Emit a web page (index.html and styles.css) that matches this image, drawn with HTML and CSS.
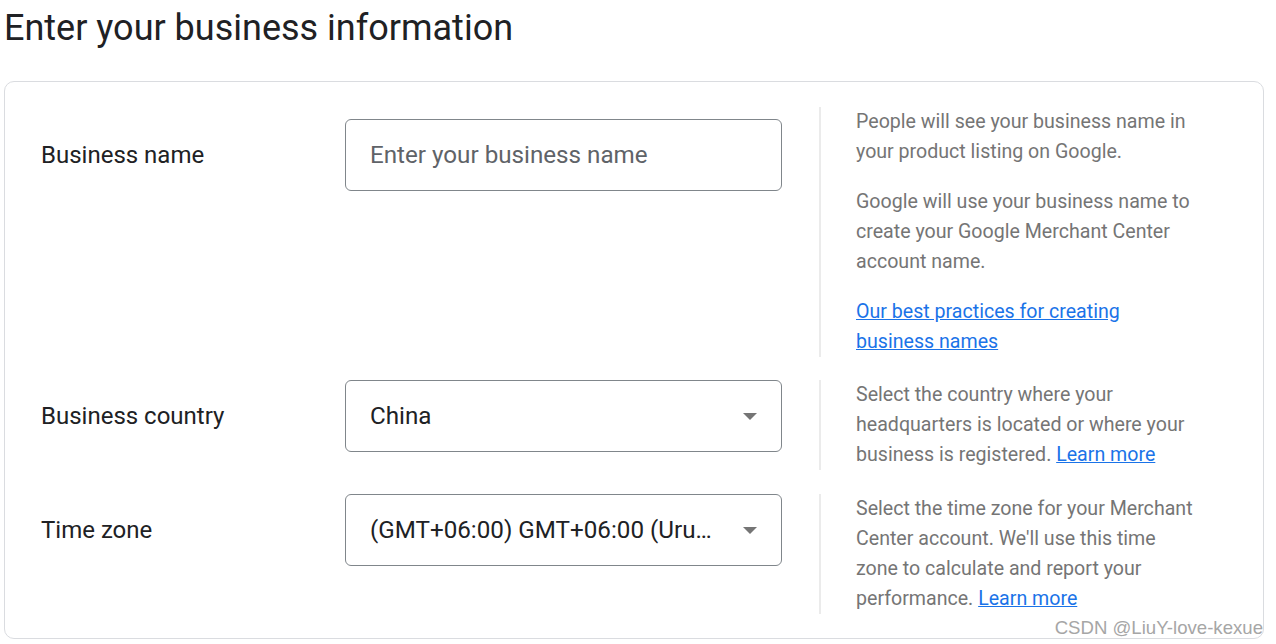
FILE: index.html
```html
<!DOCTYPE html>
<html lang="en">
<head>
<meta charset="utf-8">
<title>Enter your business information</title>
<link rel="stylesheet" href="styles.css">
</head>
<body>
<div class="page">
  <h1 class="title">Enter your business information</h1>
  <div class="card">
    <div class="row row-first">
      <div class="label">Business name</div>
      <div class="field">
        <div class="input placeholder">Enter your business name</div>
      </div>
      <div class="help">
        <p>People will see your business name in your product listing on Google.</p>
        <p>Google will use your business name to create your Google Merchant Center account name.</p>
        <p><a href="#">Our best practices for creating business names</a></p>
      </div>
    </div>
    <div class="row">
      <div class="label">Business country</div>
      <div class="field">
        <div class="input select"><span class="value">China</span><span class="arrow"></span></div>
      </div>
      <div class="help">
        <p>Select the country where your headquarters is located or where your business is registered. <a href="#">Learn more</a></p>
      </div>
    </div>
    <div class="row">
      <div class="label">Time zone</div>
      <div class="field">
        <div class="input select"><span class="value">(GMT+06:00) GMT+06:00 (Uruguay)</span><span class="arrow"></span></div>
      </div>
      <div class="help">
        <p>Select the time zone for your Merchant Center account. We'll use this time zone to calculate and report your performance. <a href="#">Learn more</a></p>
      </div>
    </div>
    <div class="watermark">CSDN @LiuY-love-kexue</div>
  </div>
</div>
</body>
</html>
```

FILE: styles.css
```css
html, body {
  margin: 0;
  padding: 0;
  background: #ffffff;
}
body {
  font-family: Roboto, "Liberation Sans", Arial, sans-serif;
  color: #202124;
}
.page {
  padding: 0 12px 0 4px;
}
.title {
  margin: 0;
  font-family: Roboto, "Liberation Sans", sans-serif;
  font-weight: 400;
  font-size: 36px;
  line-height: 54px;
  height: 54px;
  padding-top: 1px;
  margin-bottom: 26px;
  color: #202124;
}
.card {
  position: relative;
  border: 1px solid #dadce0;
  border-radius: 10px;
  padding: 25px 36px 23px 36px;
  display: flex;
  flex-direction: column;
  gap: 24px;
  height: 508px;
}
.row {
  display: grid;
  grid-template-columns: 304px 437px 1fr;
  align-items: start;
}
.row-first {
  margin-bottom: -1px;
}
.label {
  font-size: 24px;
  height: 72px;
  line-height: 72px;
  color: #202124;
}
.row-first .label,
.row-first .field {
  margin-top: 12px;
}
.input {
  box-sizing: border-box;
  height: 72px;
  border: 1px solid #80868b;
  border-radius: 6px;
  padding: 0 24px;
  display: flex;
  align-items: center;
  font-size: 24.2px;
}
.placeholder {
  color: #5f6368;
}
.select {
  justify-content: space-between;
  color: #202124;
}
.value {
  white-space: nowrap;
  overflow: hidden;
  text-overflow: ellipsis;
  max-width: 345px;
}
.arrow {
  width: 0;
  height: 0;
  border-left: 7.5px solid transparent;
  border-right: 7.5px solid transparent;
  border-top: 7.5px solid #757575;
}
.help {
  margin-left: 37px;
  border-left: 2px solid #ebebeb;
  padding-left: 35px;
  width: 345px;
  font-size: 19.6px;
  line-height: 30px;
  color: #757575;
}
.help p {
  margin: 0 0 20px 0;
}
.help p:last-child {
  margin-bottom: 0;
}
.help a {
  color: #1a73e8;
  text-decoration: underline;
}
.watermark {
  position: absolute;
  right: 0;
  bottom: -1px;
  font-family: "Liberation Sans", Arial, sans-serif;
  font-size: 18.6px;
  color: #a6a6a6;
  white-space: nowrap;
}
```
